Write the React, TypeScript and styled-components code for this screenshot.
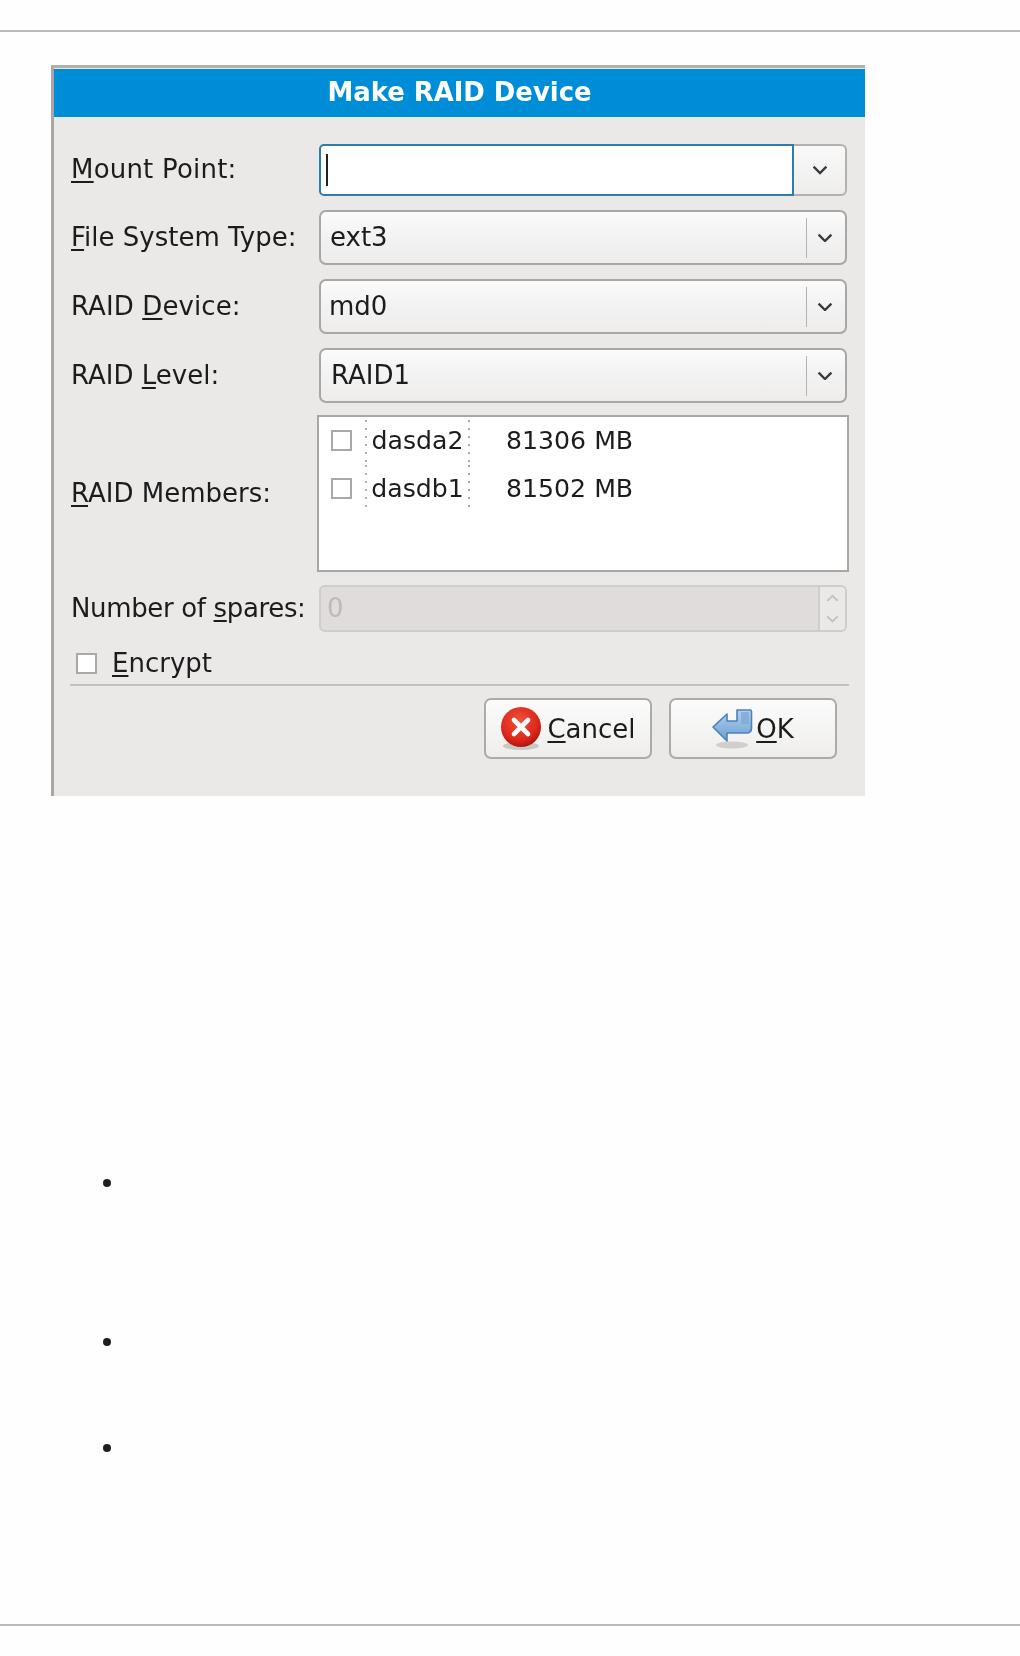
import styled, { createGlobalStyle } from 'styled-components';

const GlobalStyle = createGlobalStyle`
  html, body {
    margin: 0;
    padding: 0;
    background: #fefefe;
  }
`;

const Styled = {
  Page: styled.div`
    width: 1020px;
    height: 1656px;
    display: flex;
    flex-direction: column;
    font-family: "DejaVu Sans", sans-serif;
    color: #1c1c1c;
    overflow: hidden;
    padding-top: 30px;
    box-sizing: border-box;
  `,
  Rule: styled.div`
    height: 2px;
    background: #b9b9b9;
    flex: none;
  `,
  Dialog: styled.div`
    flex: none;
    width: 814px;
    height: 731px;
    margin: 33px 0 0 51px;
    box-sizing: border-box;
    border-top: 3px solid #b5b0ae;
    border-left: 3px solid #aaa6a4;
    background: #eae9e8;
    display: flex;
    flex-direction: column;
    font-size: 26px;
    filter: blur(0.45px);
  `,
  Title: styled.div`
    height: 48px;
    margin-top: 1px;
    background: #008dd7;
    color: #fff;
    font-weight: 700;
    font-size: 25.9px;
    line-height: 47px;
    text-align: center;
    flex: none;
  `,
  Form: styled.div`
    display: flex;
    flex-direction: column;
    padding: 27px 18px 0 16px;
  `,
  Row: styled.div<{ $height: number; $gap: number }>`
    display: grid;
    grid-template-columns: 249px 1fr;
    align-items: center;
    height: ${({ $height }) => $height}px;
    margin-bottom: ${({ $gap }) => $gap}px;
  `,
  Label: styled.label<{ $spacing?: number }>`
    white-space: nowrap;
    padding: 0 0 2px 1px;
    letter-spacing: ${({ $spacing }) => $spacing ?? 0}px;
  `,
  Mnemonic: styled.u`
    text-underline-offset: 3px;
    text-decoration-thickness: 2px;
  `,
  EntryCombo: styled.div`
    display: flex;
    height: 100%;
  `,
  Entry: styled.div`
    width: 475px;
    box-sizing: border-box;
    flex: none;
    background: #fff;
    border: 2px solid #2c7eaa;
    border-radius: 5px 0 0 5px;
    display: flex;
    align-items: center;
    padding-left: 5px;
  `,
  Caret: styled.span`
    width: 2px;
    height: 32px;
    background: #222;
  `,
  EntryButton: styled.div`
    flex: 1;
    display: flex;
    align-items: center;
    justify-content: center;
    box-sizing: border-box;
    border: 2px solid #b4b0ad;
    border-left: none;
    border-radius: 0 6px 6px 0;
    background: linear-gradient(#f9f9f9, #eeedec);
  `,
  Combo: styled.div<{ $inset: number }>`
    height: 100%;
    box-sizing: border-box;
    display: flex;
    align-items: center;
    padding-left: ${({ $inset }) => $inset}px;
    border: 2px solid #aaa6a3;
    border-radius: 7px;
    background: linear-gradient(#fbfbfb 0%, #f3f2f2 50%, #eeedec 100%);
  `,
  ComboValue: styled.span`
    flex: 1;
    padding-bottom: 2px;
  `,
  ComboArrow: styled.div`
    width: 39px;
    height: 40px;
    flex: none;
    box-sizing: border-box;
    padding-right: 2px;
    display: flex;
    align-items: center;
    justify-content: center;
    border-left: 1px solid #b5b1ae;
  `,
  Members: styled.div`
    height: 100%;
    margin: 0 -2px;
    box-sizing: border-box;
    background: #fff;
    border: 2px solid #aaa6a4;
    padding-top: 3px;
    font-size: 25.2px;
  `,
  Member: styled.div`
    display: grid;
    grid-template-columns: 46px 105px 1fr;
    align-items: stretch;
    height: 45px;

    & > div {
      padding-bottom: 4px;
    }

    & + & > div {
      padding-top: 2px;
      padding-bottom: 0;
    }
  `,
  CheckCell: styled.div`
    display: flex;
    align-items: center;
    padding-left: 12px;
  `,
  Box: styled.span`
    display: block;
    width: 21px;
    height: 21px;
    box-sizing: border-box;
    background: #fff;
    border: 2px solid #aca8a6;
    flex: none;
  `,
  Device: styled.div`
    display: flex;
    align-items: center;
    justify-content: center;
    background:
      repeating-linear-gradient(#aeaba8 0 2px, transparent 2px 8px) left top / 2px 100% no-repeat,
      repeating-linear-gradient(#aeaba8 0 2px, transparent 2px 8px) right top / 2px 100% no-repeat;
  `,
  Size: styled.div`
    display: flex;
    align-items: center;
    padding-left: 36px;
  `,
  Spin: styled.div`
    height: 100%;
    box-sizing: border-box;
    display: flex;
    border: 2px solid #cfccca;
    border-radius: 6px;
    background: #dfdcdb;
    overflow: hidden;
  `,
  SpinValue: styled.span`
    flex: 1;
    padding-left: 6px;
    color: #bcb9b7;
    line-height: 43px;
  `,
  SpinButtons: styled.div`
    width: 25px;
    flex: none;
    display: flex;
    flex-direction: column;
    align-items: center;
    justify-content: space-around;
    background: #eae9e8;
    border-left: 2px solid #cfccca;
  `,
  Encrypt: styled.div`
    display: flex;
    align-items: center;
    gap: 15px;
    height: 30px;
    margin: 16px 0 0 6px;
  `,
  EncryptLabel: styled.span`
    white-space: nowrap;
  `,
  Divider: styled.div`
    height: 2px;
    margin: 6px -2px 0 0;
    background: #c3c0be;
  `,
  Footer: styled.div`
    display: flex;
    justify-content: flex-end;
    gap: 17px;
    padding: 12px 28px 0 0;
  `,
  Button: styled.div<{ $gap: number }>`
    width: 168px;
    height: 61px;
    box-sizing: border-box;
    display: flex;
    align-items: center;
    justify-content: center;
    gap: ${({ $gap }) => $gap}px;
    border: 2px solid #aeaaa7;
    border-radius: 7px;
    background: linear-gradient(#fbfbfb 0%, #f5f5f4 50%, #eeedec 100%);
  `,
  List: styled.ul`
    list-style: none;
    margin: 0;
    padding: 0 0 0 103px;
    display: flex;
    flex-direction: column;
    flex: none;
  `,
  Bullet: styled.li<{ $top: number }>`
    width: 8px;
    height: 8px;
    margin-top: ${({ $top }) => $top}px;
    border-radius: 50%;
    background: #1f1f1f;
  `,
  Spacer: styled.div`
    flex: 1;
  `,
  BottomRule: styled.div`
    height: 2px;
    background: #b9b9b9;
    flex: none;
    margin-bottom: 30px;
  `,
};

function Chevron({ color = '#3a3a3a', up = false, size = 16 }: { color?: string; up?: boolean; size?: number }) {
  return (
    <svg width={size} height={size * 0.6} viewBox="0 0 15 9" fill="none">
      <path d={up ? 'M1.5 8 7.5 2l6 6' : 'M1.5 1.5l6 6 6-6'} stroke={color} strokeWidth="2.2" />
    </svg>
  );
}

function CancelIcon() {
  return (
    <svg width="42" height="44" viewBox="0 0 42 44">
      <defs>
        <radialGradient id="cancelRed" cx="45%" cy="35%" r="70%">
          <stop offset="0%" stopColor="#f0503c" />
          <stop offset="65%" stopColor="#dd2a1c" />
          <stop offset="100%" stopColor="#a51208" />
        </radialGradient>
      </defs>
      <ellipse cx="21" cy="39" rx="18" ry="4" fill="#8e8c8a" opacity="0.4" />
      <circle cx="21" cy="20" r="20" fill="url(#cancelRed)" />
      <path d="M14 13l14 14M28 13 14 27" stroke="#fff" strokeWidth="4.6" strokeLinecap="round" />
    </svg>
  );
}

function OkIcon() {
  return (
    <svg width="42" height="42" viewBox="0 0 42 42">
      <defs>
        <linearGradient id="okBlue" x1="0" y1="0" x2="0" y2="1">
          <stop offset="0%" stopColor="#b4d0ec" />
          <stop offset="100%" stopColor="#6a9fd2" />
        </linearGradient>
      </defs>
      <ellipse cx="20" cy="37" rx="16" ry="3.5" fill="#a9a7a5" opacity="0.45" />
      <path
        d="M1 19 15 6v7h10V2h13a1.500 1.500 0 0 1 1.500 1.500V20q0 5-5 5H15v8Z"
        fill="url(#okBlue)"
        stroke="#4a82bc"
        strokeWidth="1.600"
        strokeLinejoin="round"
      />
      <path d="M29 4h8v12h-8Z" fill="#7fa9d6" opacity="0.8" />
    </svg>
  );
}

const members = [
  { device: 'dasda2', size: '81306 MB' },
  { device: 'dasdb1', size: '81502 MB' },
];

export default function App() {
  return (
    <Styled.Page>
      <GlobalStyle />
      <Styled.Rule />
      <Styled.Dialog>
        <Styled.Title>Make RAID Device</Styled.Title>
        <Styled.Form>
          <Styled.Row $height={52} $gap={14}>
            <Styled.Label $spacing={0.2}><Styled.Mnemonic>M</Styled.Mnemonic>ount Point:</Styled.Label>
            <Styled.EntryCombo>
              <Styled.Entry><Styled.Caret /></Styled.Entry>
              <Styled.EntryButton><Chevron /></Styled.EntryButton>
            </Styled.EntryCombo>
          </Styled.Row>
          <Styled.Row $height={55} $gap={14}>
            <Styled.Label><Styled.Mnemonic>F</Styled.Mnemonic>ile System Type:</Styled.Label>
            <Styled.Combo $inset={9}>
              <Styled.ComboValue>ext3</Styled.ComboValue>
              <Styled.ComboArrow><Chevron /></Styled.ComboArrow>
            </Styled.Combo>
          </Styled.Row>
          <Styled.Row $height={55} $gap={14}>
            <Styled.Label $spacing={0.1}>RAID <Styled.Mnemonic>D</Styled.Mnemonic>evice:</Styled.Label>
            <Styled.Combo $inset={8}>
              <Styled.ComboValue>md0</Styled.ComboValue>
              <Styled.ComboArrow><Chevron /></Styled.ComboArrow>
            </Styled.Combo>
          </Styled.Row>
          <Styled.Row $height={55} $gap={12}>
            <Styled.Label>RAID <Styled.Mnemonic>L</Styled.Mnemonic>evel:</Styled.Label>
            <Styled.Combo $inset={10}>
              <Styled.ComboValue>RAID1</Styled.ComboValue>
              <Styled.ComboArrow><Chevron /></Styled.ComboArrow>
            </Styled.Combo>
          </Styled.Row>
          <Styled.Row $height={157} $gap={13}>
            <Styled.Label>
              <Styled.Mnemonic>R</Styled.Mnemonic>AID Members:
            </Styled.Label>
            <Styled.Members>
              {members.map(({ device, size }) => (
                <Styled.Member key={device}>
                  <Styled.CheckCell><Styled.Box /></Styled.CheckCell>
                  <Styled.Device>{device}</Styled.Device>
                  <Styled.Size>{size}</Styled.Size>
                </Styled.Member>
              ))}
            </Styled.Members>
          </Styled.Row>
          <Styled.Row $height={47} $gap={0}>
            <Styled.Label $spacing={-0.35}>Number of <Styled.Mnemonic>s</Styled.Mnemonic>pares:</Styled.Label>
            <Styled.Spin>
              <Styled.SpinValue>0</Styled.SpinValue>
              <Styled.SpinButtons>
                <Chevron up color="#c4c1bf" size={13} />
                <Chevron color="#c4c1bf" size={13} />
              </Styled.SpinButtons>
            </Styled.Spin>
          </Styled.Row>
          <Styled.Encrypt>
            <Styled.Box />
            <Styled.EncryptLabel><Styled.Mnemonic>E</Styled.Mnemonic>ncrypt</Styled.EncryptLabel>
          </Styled.Encrypt>
          <Styled.Divider />
        </Styled.Form>
        <Styled.Footer>
          <Styled.Button $gap={5}>
            <CancelIcon />
            <span><Styled.Mnemonic>C</Styled.Mnemonic>ancel</span>
          </Styled.Button>
          <Styled.Button $gap={2}>
            <OkIcon />
            <span><Styled.Mnemonic>O</Styled.Mnemonic>K</span>
          </Styled.Button>
        </Styled.Footer>
      </Styled.Dialog>
      <Styled.List>
        <Styled.Bullet $top={383} />
        <Styled.Bullet $top={151} />
        <Styled.Bullet $top={98} />
      </Styled.List>
      <Styled.Spacer />
      <Styled.BottomRule />
    </Styled.Page>
  );
}
